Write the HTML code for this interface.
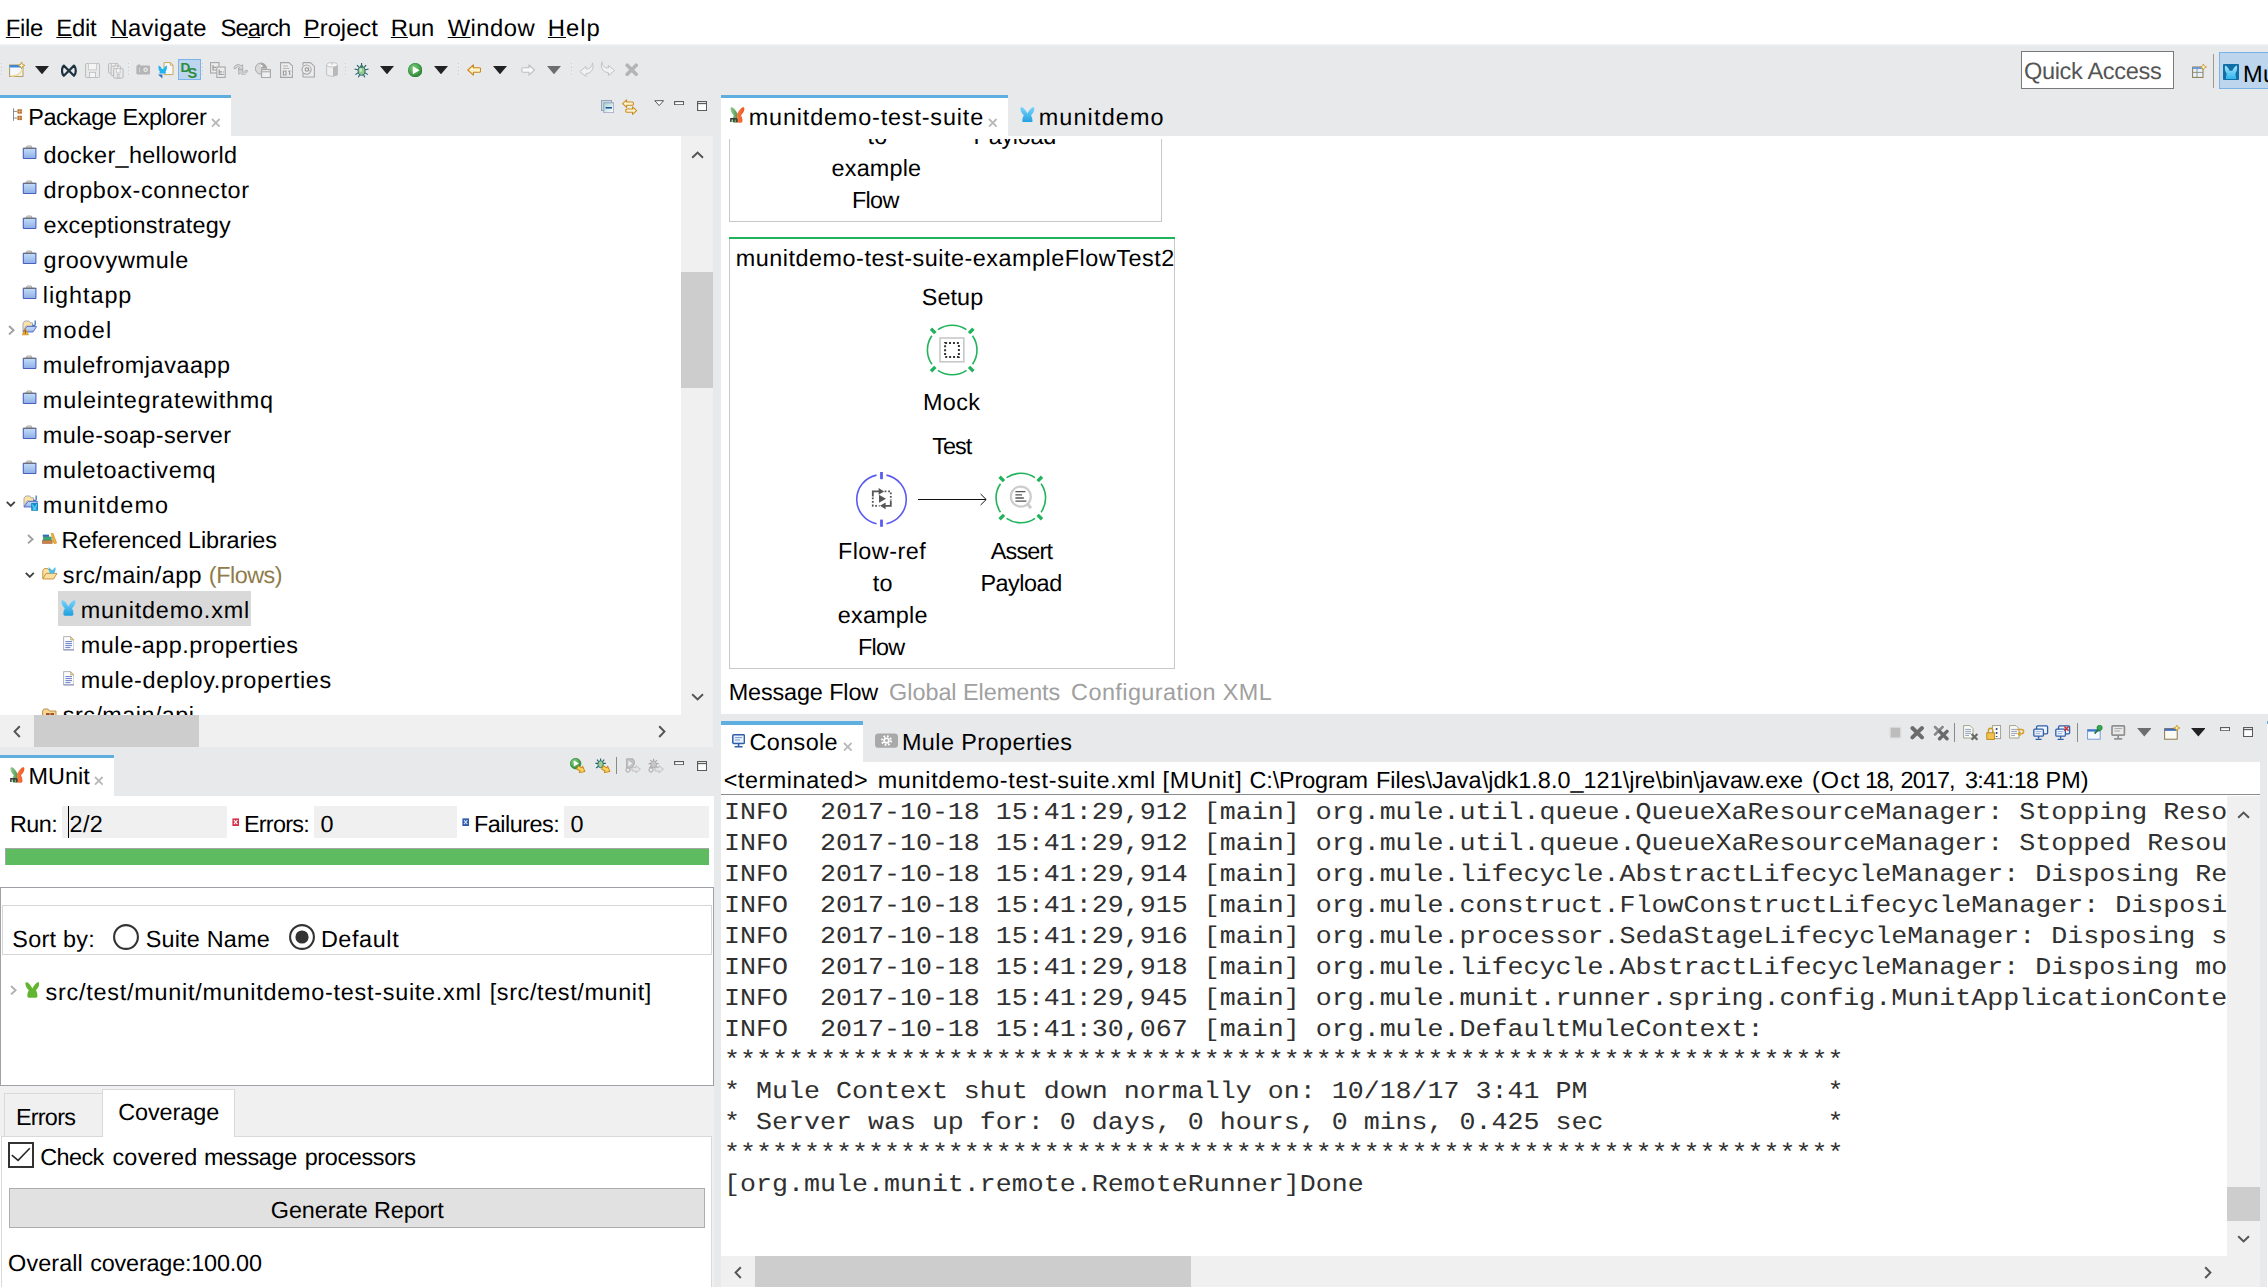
<!DOCTYPE html>
<html><head><meta charset="utf-8"><title>Anypoint Studio</title>
<style>
html,body{margin:0;padding:0}
body{width:2268px;height:1287px;overflow:hidden;background:#e8e9eb;position:relative;font-family:"Liberation Sans",sans-serif}
.r{position:absolute;display:block}
.t{position:absolute;white-space:pre;line-height:1;text-rendering:geometricPrecision;font-family:"Liberation Sans",sans-serif}
.m{position:absolute;white-space:pre;line-height:1;text-rendering:geometricPrecision;font-family:"Liberation Mono",monospace;font-size:24.2px;transform:scaleX(1.1017);transform-origin:0 0;color:#303030}
u{text-decoration-thickness:1.2px;text-underline-offset:1px}
</style></head><body>
<div class="r" style="left:0px;top:0px;width:2268.00px;height:44.00px;background:#fff;"></div>
<span class="t" style="left:5.85px;top:17.00px;font-size:23.8px;letter-spacing:-0.314px;color:#000;"><u>F</u>ile</span>
<span class="t" style="left:56.35px;top:17.00px;font-size:23.8px;letter-spacing:-0.262px;color:#000;"><u>E</u>dit</span>
<span class="t" style="left:110.55px;top:17.00px;font-size:23.8px;letter-spacing:0.296px;color:#000;"><u>N</u>avigate</span>
<span class="t" style="left:220.52px;top:17.00px;font-size:23.8px;letter-spacing:-0.937px;color:#000;">Se<u>a</u>rch</span>
<span class="t" style="left:303.85px;top:17.00px;font-size:23.8px;letter-spacing:-0.008px;color:#000;"><u>P</u>roject</span>
<span class="t" style="left:390.85px;top:17.00px;font-size:23.8px;letter-spacing:-0.132px;color:#000;"><u>R</u>un</span>
<span class="t" style="left:447.70px;top:17.00px;font-size:23.8px;letter-spacing:0.459px;color:#000;"><u>W</u>indow</span>
<span class="t" style="left:547.85px;top:17.00px;font-size:23.8px;letter-spacing:0.967px;color:#000;"><u>H</u>elp</span>
<div class="r" style="left:0px;top:44px;width:2268.00px;height:2.00px;background:linear-gradient(#f4f4f5,#e8e9eb);"></div>
<div class="r" style="left:2021px;top:51px;width:153.00px;height:38.00px;background:#fff;border:1px solid #7a7a7a;box-sizing:border-box;"></div>
<span class="t" style="left:2023.88px;top:61.00px;font-size:23.6px;letter-spacing:-0.334px;color:#555;">Quick Access</span>
<div class="r" style="left:2213px;top:54px;width:1.00px;height:34.00px;background:#9a9a9a;"></div>
<div class="r" style="left:2219px;top:52px;width:49.00px;height:37.00px;background:#bdd6ee;border:1px solid #7ab2ea;border-right:none;box-sizing:border-box;"></div>
<span class="t" style="left:2243.06px;top:64.00px;font-size:23.6px;letter-spacing:0.418px;color:#000;">Mu</span>
<div class="r" style="left:0px;top:95px;width:231.00px;height:3.00px;background:#5eaee0;"></div>
<div class="r" style="left:0px;top:98px;width:231.00px;height:37.50px;background:#fff;"></div>
<span class="t" style="left:28.28px;top:106.00px;font-size:23.4px;letter-spacing:-0.413px;color:#000;">Package Explorer</span>
<div class="r" style="left:0px;top:135.5px;width:681.30px;height:579.10px;background:#fff;"></div>
<div class="r" style="left:681.3px;top:135.5px;width:32.20px;height:611.50px;background:#f0f0f0;"></div>
<div class="r" style="left:681.3px;top:271.8px;width:32.20px;height:116.70px;background:#cdcdcd;"></div>
<div class="r" style="left:0px;top:714.6px;width:681.30px;height:32.40px;background:#f0f0f0;"></div>
<div class="r" style="left:34px;top:714.6px;width:164.70px;height:32.40px;background:#cdcdcd;"></div>
<div class="r" style="left:58px;top:591px;width:192.70px;height:35.00px;background:#d9d9d9;"></div>
<span class="t" style="left:43.42px;top:144.00px;font-size:23.4px;letter-spacing:0.324px;color:#000;">docker_helloworld</span>
<span class="t" style="left:43.42px;top:179.00px;font-size:23.4px;letter-spacing:0.659px;color:#000;">dropbox-connector</span>
<span class="t" style="left:43.41px;top:214.00px;font-size:23.4px;letter-spacing:0.246px;color:#000;">exceptionstrategy</span>
<span class="t" style="left:43.42px;top:249.00px;font-size:23.4px;letter-spacing:0.717px;color:#000;">groovywmule</span>
<span class="t" style="left:42.82px;top:284.00px;font-size:23.4px;letter-spacing:0.941px;color:#000;">lightapp</span>
<span class="t" style="left:42.85px;top:319.00px;font-size:23.4px;letter-spacing:1.171px;color:#000;">model</span>
<span class="t" style="left:42.85px;top:354.00px;font-size:23.4px;letter-spacing:0.560px;color:#000;">mulefromjavaapp</span>
<span class="t" style="left:42.85px;top:389.00px;font-size:23.4px;letter-spacing:0.802px;color:#000;">muleintegratewithmq</span>
<span class="t" style="left:42.85px;top:424.00px;font-size:23.4px;letter-spacing:0.412px;color:#000;">mule-soap-server</span>
<span class="t" style="left:42.85px;top:459.00px;font-size:23.4px;letter-spacing:0.691px;color:#000;">muletoactivemq</span>
<span class="t" style="left:42.85px;top:494.00px;font-size:23.4px;letter-spacing:1.197px;color:#000;">munitdemo</span>
<span class="t" style="left:61.58px;top:529.00px;font-size:23.4px;letter-spacing:-0.093px;color:#000;">Referenced Libraries</span>
<span class="t" style="left:62.85px;top:564.00px;font-size:23.4px;letter-spacing:0.443px;color:#000;">src/main/app</span>
<span class="t" style="left:80.65px;top:599.00px;font-size:23.4px;letter-spacing:0.831px;color:#000;">munitdemo.xml</span>
<span class="t" style="left:80.65px;top:634.00px;font-size:23.4px;letter-spacing:0.521px;color:#000;">mule-app.properties</span>
<span class="t" style="left:80.65px;top:669.00px;font-size:23.4px;letter-spacing:0.686px;color:#000;">mule-deploy.properties</span>
<span class="t" style="left:208.85px;top:564.00px;font-size:23.4px;letter-spacing:-0.482px;color:#8f7c4a;">(Flows)</span>
<div class="r" style="left:0;top:696px;width:681px;height:18.6px;overflow:hidden">
<span class="t" style="left:62.85px;top:8.00px;font-size:23.4px;letter-spacing:0.453px;color:#000;">src/main/api</span>
</div>
<div class="r" style="left:0px;top:755px;width:114.00px;height:3.00px;background:#5eaee0;"></div>
<div class="r" style="left:0px;top:758px;width:114.00px;height:38.00px;background:#fff;"></div>
<span class="t" style="left:28.48px;top:765.00px;font-size:23.4px;letter-spacing:0.071px;color:#000;">MUnit</span>
<div class="r" style="left:0px;top:796px;width:713.80px;height:491.00px;background:#fff;"></div>
<span class="t" style="left:9.88px;top:813.00px;font-size:23.4px;letter-spacing:-0.491px;color:#000;">Run:</span>
<div class="r" style="left:62px;top:806px;width:165.00px;height:32.00px;background:#f0f0f0;"></div>
<div class="r" style="left:68px;top:806px;width:1.30px;height:32.00px;background:#000;"></div>
<span class="t" style="left:69.62px;top:813.00px;font-size:23.4px;letter-spacing:0.362px;color:#000;">2/2</span>
<span class="t" style="left:243.88px;top:813.00px;font-size:23.4px;letter-spacing:-0.708px;color:#000;">Errors:</span>
<div class="r" style="left:314px;top:806px;width:143.00px;height:32.00px;background:#f0f0f0;"></div>
<span class="t" style="left:320.39px;top:813.00px;font-size:23.4px;letter-spacing:-0.286px;color:#000;">0</span>
<span class="t" style="left:473.88px;top:813.00px;font-size:23.4px;letter-spacing:-0.472px;color:#000;">Failures:</span>
<div class="r" style="left:564px;top:806px;width:145.00px;height:32.00px;background:#f0f0f0;"></div>
<span class="t" style="left:570.49px;top:813.00px;font-size:23.4px;letter-spacing:-0.486px;color:#000;">0</span>
<div class="r" style="left:5px;top:848px;width:704.00px;height:17.00px;background:#5fbb5f;border-top:1px solid #a3a8a3;border-left:1px solid #a3a8a3;box-sizing:border-box;"></div>
<div class="r" style="left:0px;top:887px;width:714.00px;height:198.80px;background:#fff;border:1.5px solid #a0a0a8;box-sizing:border-box;"></div>
<div class="r" style="left:1.8px;top:905px;width:710.20px;height:50.20px;background:#fff;border:1px solid #d6d6d6;box-sizing:border-box;"></div>
<span class="t" style="left:12.34px;top:928.00px;font-size:23.4px;letter-spacing:0.267px;color:#000;">Sort by:</span>
<span class="t" style="left:145.74px;top:928.00px;font-size:23.4px;letter-spacing:0.194px;color:#000;">Suite Name</span>
<span class="t" style="left:320.88px;top:928.00px;font-size:23.4px;letter-spacing:0.608px;color:#000;">Default</span>
<span class="t" style="left:45.55px;top:981.00px;font-size:23.4px;letter-spacing:0.753px;color:#000;">src/test/munit/munitdemo-test-suite.xml</span>
<span class="t" style="left:489.73px;top:981.00px;font-size:23.4px;letter-spacing:0.633px;color:#000;">[src/test/munit]</span>
<div class="r" style="left:0px;top:1085.8px;width:713.80px;height:50.20px;background:#f0f0f0;"></div>
<div class="r" style="left:4px;top:1093px;width:99.00px;height:43.00px;background:#f0f0f0;border:1px solid #d9d9d9;border-bottom:none;box-sizing:border-box;"></div>
<div class="r" style="left:102px;top:1089.4px;width:132.60px;height:47.60px;background:#fff;border:1px solid #d9d9d9;border-bottom:none;box-sizing:border-box;"></div>
<div class="r" style="left:0.5px;top:1135.6px;width:711.00px;height:154.40px;background:#fff;border:1px solid #d9d9d9;box-sizing:border-box;"></div>
<div class="r" style="left:103px;top:1134px;width:130.60px;height:4.00px;background:#fff;"></div>
<div class="r" style="left:711.5px;top:1135.6px;width:2.30px;height:151.40px;background:#f0f0f0;"></div>
<span class="t" style="left:15.88px;top:1106.00px;font-size:23.4px;letter-spacing:-0.728px;color:#000;">Errors</span>
<span class="t" style="left:118.21px;top:1101.00px;font-size:23.4px;letter-spacing:-0.062px;color:#000;">Coverage</span>
<div class="r" style="left:8.3px;top:1142.1px;width:25.60px;height:25.50px;background:#fff;border:2px solid #333;box-sizing:border-box;"></div>
<span class="t" style="left:40.21px;top:1146.00px;font-size:23.4px;letter-spacing:-0.569px;color:#000;">Check</span>
<span class="t" style="left:112.41px;top:1146.00px;font-size:23.4px;letter-spacing:0.259px;color:#000;">covered</span>
<span class="t" style="left:204.05px;top:1146.00px;font-size:23.4px;letter-spacing:-0.276px;color:#000;">message</span>
<span class="t" style="left:304.69px;top:1146.00px;font-size:23.4px;letter-spacing:-0.343px;color:#000;">processors</span>
<div class="r" style="left:9px;top:1188.2px;width:696.00px;height:39.60px;background:#e1e1e1;border:1px solid #adadad;box-sizing:border-box;"></div>
<span class="t" style="left:270.82px;top:1199.00px;font-size:23.4px;letter-spacing:-0.090px;color:#000;">Generate Report</span>
<span class="t" style="left:8.09px;top:1252.00px;font-size:23.4px;letter-spacing:0.109px;color:#000;">Overall</span>
<span class="t" style="left:90.21px;top:1252.00px;font-size:23.4px;letter-spacing:-0.181px;color:#000;">coverage:100.00</span>
<div class="r" style="left:721px;top:95px;width:286.70px;height:3.00px;background:#5eaee0;"></div>
<div class="r" style="left:721px;top:98px;width:286.70px;height:37.50px;background:#fff;"></div>
<div class="r" style="left:721px;top:135.5px;width:1547.00px;height:578.00px;background:#fff;"></div>
<span class="t" style="left:748.75px;top:106.00px;font-size:23.4px;letter-spacing:0.842px;color:#000;">munitdemo-test-suite</span>
<span class="t" style="left:1038.65px;top:106.00px;font-size:23.4px;letter-spacing:1.160px;color:#000;">munitdemo</span>
<div class="r" style="left:721px;top:139px;width:1547px;height:540px;overflow:hidden"><div style="position:absolute;left:-721px;top:-139px">
<div class="r" style="left:729px;top:100px;width:433.00px;height:122.00px;background:#fff;border:1px solid #c8c8c8;box-sizing:border-box;"></div>
<span class="t" style="left:867.45px;top:125.00px;font-size:23.4px;letter-spacing:0.222px;color:#000;">to</span>
<span class="t" style="left:973.38px;top:125.00px;font-size:23.4px;letter-spacing:-0.290px;color:#000;">Payload</span>
<span class="t" style="left:831.61px;top:157.00px;font-size:23.4px;letter-spacing:0.181px;color:#000;">example</span>
<span class="t" style="left:851.88px;top:189.00px;font-size:23.4px;letter-spacing:-0.648px;color:#000;">Flow</span>
<div class="r" style="left:729px;top:239px;width:446.00px;height:430.00px;background:#fff;border:1px solid #c8c8c8;border-top:none;box-sizing:border-box;"></div>
<div class="r" style="left:729px;top:236.6px;width:446.00px;height:2.70px;background:#21b35c;"></div>
<span class="t" style="left:735.75px;top:247.00px;font-size:23.4px;letter-spacing:0.516px;color:#000;">munitdemo-test-suite-exampleFlowTest2</span>
<span class="t" style="left:921.74px;top:286.00px;font-size:23.4px;letter-spacing:0.073px;color:#000;">Setup</span>
<span class="t" style="left:922.88px;top:391.00px;font-size:23.4px;letter-spacing:0.426px;color:#000;">Mock</span>
<span class="t" style="left:932.27px;top:435.00px;font-size:23.4px;letter-spacing:-0.939px;color:#000;">Test</span>
<span class="t" style="left:837.88px;top:540.00px;font-size:23.4px;letter-spacing:0.497px;color:#000;">Flow-ref</span>
<span class="t" style="left:872.75px;top:572.00px;font-size:23.4px;letter-spacing:0.222px;color:#000;">to</span>
<span class="t" style="left:837.81px;top:604.00px;font-size:23.4px;letter-spacing:0.197px;color:#000;">example</span>
<span class="t" style="left:857.88px;top:636.00px;font-size:23.4px;letter-spacing:-0.715px;color:#000;">Flow</span>
<span class="t" style="left:990.75px;top:540.00px;font-size:23.4px;letter-spacing:-0.800px;color:#000;">Assert</span>
<span class="t" style="left:980.38px;top:572.00px;font-size:23.4px;letter-spacing:-0.456px;color:#000;">Payload</span>
<svg class="r" style="left:721px;top:139px" width="500" height="540" viewBox="721 139 500 540"><path d="M966.42,370.31 A24.8,24.8 0 0 1 937.98,370.31" fill="none" stroke="#21b35c" stroke-width="1.6"/><path d="M931.89,364.22 A24.8,24.8 0 0 1 931.89,335.78" fill="none" stroke="#21b35c" stroke-width="1.6"/><path d="M937.98,329.69 A24.8,24.8 0 0 1 966.42,329.69" fill="none" stroke="#21b35c" stroke-width="1.6"/><path d="M972.51,335.78 A24.8,24.8 0 0 1 972.51,364.22" fill="none" stroke="#21b35c" stroke-width="1.6"/><path d="M969.03,366.83 L973.41,371.21" stroke="#21b35c" stroke-width="3.4"/><path d="M935.37,366.83 L930.99,371.21" stroke="#21b35c" stroke-width="3.4"/><path d="M935.37,333.17 L930.99,328.79" stroke="#21b35c" stroke-width="3.4"/><path d="M969.03,333.17 L973.41,328.79" stroke="#21b35c" stroke-width="3.4"/><rect x="940" y="338" width="23.8" height="23.8" fill="#fff" stroke="#c8c8c8" stroke-width="1.6"/><rect x="945.1" y="343.1" width="13.8" height="13.8" fill="none" stroke="#333" stroke-width="2" stroke-dasharray="2,1.93"/><path d="M876.56,523.70 A24.8,24.8 0 0 1 876.56,475.10" fill="none" stroke="#5b5bf2" stroke-width="1.6"/><path d="M886.44,475.10 A24.8,24.8 0 0 1 886.44,523.70" fill="none" stroke="#5b5bf2" stroke-width="1.6"/><path d="M881.50,519.60 L881.50,526.80" stroke="#5b5bf2" stroke-width="2.8"/><path d="M881.50,479.20 L881.50,472.00" stroke="#5b5bf2" stroke-width="2.8"/><g transform="translate(871.5999999999999,487.4)"><path d="M1.2,9 V4 H8" fill="none" stroke="#555" stroke-width="1.8"/><polygon points="7,0.6 12.6,4 7,7.4" fill="#555"/><path d="M19.2,13 V18.4 H13" fill="none" stroke="#555" stroke-width="1.8"/><polygon points="14,15 8.4,18.4 14,21.8" fill="#555"/><polygon points="7.4,7.4 14.4,11.4 7.4,15.4" fill="#555"/><path d="M1.2,10 V18.4 H8" fill="none" stroke="#555" stroke-width="1.8" stroke-dasharray="1.8,1.8"/><path d="M13,4 H19.2 V12.6" fill="none" stroke="#555" stroke-width="1.8" stroke-dasharray="1.8,1.8"/></g><path d="M1035.02,518.31 A24.8,24.8 0 0 1 1006.58,518.31" fill="none" stroke="#21b35c" stroke-width="1.6"/><path d="M1000.49,512.22 A24.8,24.8 0 0 1 1000.49,483.78" fill="none" stroke="#21b35c" stroke-width="1.6"/><path d="M1006.58,477.69 A24.8,24.8 0 0 1 1035.02,477.69" fill="none" stroke="#21b35c" stroke-width="1.6"/><path d="M1041.11,483.78 A24.8,24.8 0 0 1 1041.11,512.22" fill="none" stroke="#21b35c" stroke-width="1.6"/><path d="M1037.63,514.83 L1042.01,519.21" stroke="#21b35c" stroke-width="3.4"/><path d="M1003.97,514.83 L999.59,519.21" stroke="#21b35c" stroke-width="3.4"/><path d="M1003.97,481.17 L999.59,476.79" stroke="#21b35c" stroke-width="3.4"/><path d="M1037.63,481.17 L1042.01,476.79" stroke="#21b35c" stroke-width="3.4"/><circle cx="1020.8" cy="496.6" r="10" fill="#fff" stroke="#cdcdcd" stroke-width="2.2"/><path d="M1027.3999999999999,503.8 L1031.0,508.20000000000005" stroke="#cdcdcd" stroke-width="3"/><path d="M1015.4,491.6 H1025.3999999999999 M1015.4,494.8 H1022.0 M1015.4,498.0 H1023.8 M1015.4,501.20000000000005 H1026.3999999999999" stroke="#555" stroke-width="1.3"/><path d="M918,499.5 H986 M980.6,494 L986.2,499.5 L980.6,505" fill="none" stroke="#111" stroke-width="1"/></svg>
</div></div>
<span class="t" style="left:728.68px;top:681.00px;font-size:23.4px;letter-spacing:-0.118px;color:#000;">Message Flow</span>
<span class="t" style="left:889.12px;top:681.00px;font-size:23.4px;letter-spacing:-0.033px;color:#a0a0a0;">Global Elements</span>
<span class="t" style="left:1071.11px;top:681.00px;font-size:23.4px;letter-spacing:0.435px;color:#a0a0a0;">Configuration XML</span>
<div class="r" style="left:721px;top:721px;width:142.00px;height:3.70px;background:#5eaee0;"></div>
<div class="r" style="left:721px;top:724.7px;width:142.00px;height:37.30px;background:#fff;"></div>
<span class="t" style="left:749.61px;top:731.00px;font-size:23.4px;letter-spacing:0.362px;color:#000;">Console</span>
<span class="t" style="left:901.88px;top:731.00px;font-size:23.4px;letter-spacing:0.442px;color:#000;">Mule Properties</span>
<div class="r" style="left:721px;top:762px;width:1539.00px;height:525.00px;background:#fff;"></div>
<div class="r" style="left:2266.5px;top:720.5px;width:1.50px;height:3.50px;background:#5eaee0;"></div>
<div class="r" style="left:2266.5px;top:724px;width:1.50px;height:563.00px;background:#fff;"></div>
<span class="t" style="left:723.65px;top:769.00px;font-size:23.4px;letter-spacing:0.555px;color:#000;">&lt;terminated&gt;</span>
<span class="t" style="left:877.65px;top:769.00px;font-size:23.4px;letter-spacing:0.706px;color:#000;">munitdemo-test-suite.xml</span>
<span class="t" style="left:1162.53px;top:769.00px;font-size:23.4px;letter-spacing:0.855px;color:#000;">[MUnit]</span>
<span class="t" style="left:1249.61px;top:769.00px;font-size:23.4px;letter-spacing:-0.145px;color:#000;">C:\Program</span>
<span class="t" style="left:1375.88px;top:769.00px;font-size:23.4px;letter-spacing:0.048px;color:#000;">Files\Java\jdk1.8.0_121\jre\bin\javaw.exe</span>
<span class="t" style="left:1811.95px;top:769.00px;font-size:23.4px;letter-spacing:1.109px;color:#000;">(Oct</span>
<span class="t" style="left:1865.02px;top:769.00px;font-size:23.4px;letter-spacing:-1.472px;color:#000;">18,</span>
<span class="t" style="left:1900.62px;top:769.00px;font-size:23.4px;letter-spacing:-0.895px;color:#000;">2017,</span>
<span class="t" style="left:1964.91px;top:769.00px;font-size:23.4px;letter-spacing:-0.644px;color:#000;">3:41:18</span>
<span class="t" style="left:2045.48px;top:769.00px;font-size:23.4px;letter-spacing:0.138px;color:#000;">PM)</span>
<div class="r" style="left:721px;top:793.8px;width:1539.00px;height:1.20px;background:#8c8c8c;"></div>
<div class="r" style="left:2227px;top:796.4px;width:33.00px;height:459.60px;background:#f0f0f0;"></div>
<div class="r" style="left:2227px;top:1187px;width:33.00px;height:34.00px;background:#cdcdcd;"></div>
<div class="r" style="left:721px;top:1255.7px;width:1539.00px;height:31.30px;background:#f0f0f0;"></div>
<div class="r" style="left:754.7px;top:1255.7px;width:436.30px;height:31.30px;background:#cdcdcd;"></div>
<div class="r" style="left:721px;top:796px;width:1505.5px;height:459px;overflow:hidden">
<span class="m" style="left:2.5px;top:6px">INFO  2017-10-18 15:41:29,912 [main] org.mule.util.queue.QueueXaResourceManager: Stopping ResourceManager</span>
<span class="m" style="left:2.5px;top:37px">INFO  2017-10-18 15:41:29,912 [main] org.mule.util.queue.QueueXaResourceManager: Stopped ResourceManager</span>
<span class="m" style="left:2.5px;top:68px">INFO  2017-10-18 15:41:29,914 [main] org.mule.lifecycle.AbstractLifecycleManager: Disposing RegistryLifecycleManager</span>
<span class="m" style="left:2.5px;top:99px">INFO  2017-10-18 15:41:29,915 [main] org.mule.construct.FlowConstructLifecycleManager: Disposing flow: exampleFlow</span>
<span class="m" style="left:2.5px;top:130px">INFO  2017-10-18 15:41:29,916 [main] org.mule.processor.SedaStageLifecycleManager: Disposing service: exampleFlow.stage1</span>
<span class="m" style="left:2.5px;top:161px">INFO  2017-10-18 15:41:29,918 [main] org.mule.lifecycle.AbstractLifecycleManager: Disposing model: _muleSystemModel</span>
<span class="m" style="left:2.5px;top:192px">INFO  2017-10-18 15:41:29,945 [main] org.mule.munit.runner.spring.config.MunitApplicationContext: Closing</span>
<span class="m" style="left:2.5px;top:223px">INFO  2017-10-18 15:41:30,067 [main] org.mule.DefaultMuleContext: </span>
<span class="m" style="left:2.5px;top:254px">**********************************************************************</span>
<span class="m" style="left:2.5px;top:285px">* Mule Context shut down normally on: 10/18/17 3:41 PM               *</span>
<span class="m" style="left:2.5px;top:316px">* Server was up for: 0 days, 0 hours, 0 mins, 0.425 sec              *</span>
<span class="m" style="left:2.5px;top:347px">**********************************************************************</span>
<span class="m" style="left:2.5px;top:378px">[org.mule.munit.remote.RemoteRunner]Done</span>
</div>
<svg class="r" style="left:1px;top:62px" width="3" height="14" viewBox="0 0 3 14"><path d="M1,0 V13" stroke="#f8f8f8" stroke-width="2" stroke-dasharray="1.6,1.9"/><path d="M0.6,0.4 V13" stroke="#cfcfd3" stroke-width="1.2" stroke-dasharray="1.6,1.9"/></svg>
<svg class="r" style="left:8.6px;top:62.2px" width="16.4" height="16" viewBox="0 0 16.4 16"><rect x="0.6" y="3" width="13.4" height="11.4" fill="#f3f9ff" stroke="#b4975a" stroke-width="1"/><rect x="0.6" y="3" width="13.4" height="2.6" fill="#3f86d6"/><rect x="0.6" y="5.2" width="13.4" height="0.8" fill="#9fc6ee"/><path d="M2,14 C8,14 12,12 13.4,7" stroke="#f3dc9a" stroke-width="1.6" fill="none"/><path d="M12.6,0 L13.6,2.4 L16,3.4 L13.6,4.4 L12.6,6.8 L11.6,4.4 L9.2,3.4 L11.6,2.4 Z" fill="#fff8dc" stroke="#c8962c" stroke-width="0.9"/></svg>
<svg class="r" style="left:35px;top:66px" width="14" height="8.4" viewBox="0 0 14 8.4"><polygon points="0,0 14,0 7,8.3" fill="#222"/></svg>
<svg class="r" style="left:60.6px;top:62.6px" width="16" height="15.4" viewBox="0 0 16 15.4"><path d="M2.8,2.6 L13,12.8 C15.4,10.6 15.4,4.8 13,2.6 L2.8,12.8 C0.4,10.6 0.4,4.8 2.8,2.6 Z" fill="none" stroke="#1d333f" stroke-width="2.2" stroke-linejoin="round"/></svg>
<svg class="r" style="left:85px;top:63px" width="15.4" height="15.4" viewBox="0 0 15.4 15.4"><rect x="0.6" y="0.6" width="14" height="14" rx="1" fill="#e9e9e9" stroke="#b9b9b9" stroke-width="1"/><rect x="3.6" y="0.6" width="8" height="6.3" fill="#f4f4f4" stroke="#c4c4c4" stroke-width="0.8"/><rect x="4.6" y="9.3" width="6" height="5.3" fill="#f4f4f4" stroke="#b9b9b9" stroke-width="0.8"/></svg>
<svg class="r" style="left:108px;top:62.6px" width="16" height="16" viewBox="0 0 16 16"><rect x="0.6" y="0.6" width="9.5" height="9.5" rx="1" fill="#e9e9e9" stroke="#b9b9b9" stroke-width="1"/><rect x="3.6" y="0.6" width="3.5" height="4.3" fill="#f4f4f4" stroke="#c4c4c4" stroke-width="0.8"/><rect x="4.6" y="6.5" width="1.5" height="3.6" fill="#f4f4f4" stroke="#b9b9b9" stroke-width="0.8"/><rect x="3.1" y="3.1" width="9.5" height="9.5" rx="1" fill="#e9e9e9" stroke="#b9b9b9" stroke-width="1"/><rect x="6.1" y="3.1" width="3.5" height="4.3" fill="#f4f4f4" stroke="#c4c4c4" stroke-width="0.8"/><rect x="7.1" y="9.0" width="1.5" height="3.6" fill="#f4f4f4" stroke="#b9b9b9" stroke-width="0.8"/><rect x="5.6" y="5.6" width="9.5" height="9.5" rx="1" fill="#e9e9e9" stroke="#b9b9b9" stroke-width="1"/><rect x="8.6" y="5.6" width="3.5" height="4.3" fill="#f4f4f4" stroke="#c4c4c4" stroke-width="0.8"/><rect x="9.6" y="11.5" width="1.5" height="3.6" fill="#f4f4f4" stroke="#b9b9b9" stroke-width="0.8"/></svg>
<svg class="r" style="left:128px;top:62px" width="3" height="14" viewBox="0 0 3 14"><path d="M1,0 V13" stroke="#f8f8f8" stroke-width="2" stroke-dasharray="1.6,1.9"/><path d="M0.6,0.4 V13" stroke="#cfcfd3" stroke-width="1.2" stroke-dasharray="1.6,1.9"/></svg>
<svg class="r" style="left:136px;top:64.4px" width="14.4" height="11" viewBox="0 0 14.4 11"><path d="M0.4,2 L2,0.6 L4,0.6 L4.6,1.4 L13,1.4 Q14,1.4 14,2.4 L14,9.6 Q14,10.4 13,10.4 L1.4,10.4 Q0.4,10.4 0.4,9.6 Z" fill="#b4b4b4"/><circle cx="9.6" cy="5.8" r="2.4" fill="#e4e4e4"/><circle cx="9.6" cy="5.8" r="0.9" fill="#b4b4b4"/><rect x="3" y="3.4" width="1.1" height="5" fill="#d2d2d2"/></svg>
<svg class="r" style="left:158.4px;top:61.6px" width="16" height="17" viewBox="0 0 16 17"><path d="M6,0.6 L12.4,0.6 L15,3.2 L15,12.6 L6,12.6 Z" fill="#f7f9ff" stroke="#c9a85a" stroke-width="1"/><path d="M12.4,0.6 L12.4,3.2 L15,3.2" fill="none" stroke="#c9a85a" stroke-width="0.9"/><path d="M0.6,3.4 C2,3.8 3.4,5.4 3.8,7 L5.6,7 C6,5.4 7.4,3.8 8.8,3.4 C9.2,5.4 8.8,7.8 7.6,9.4 L8,11.4 L1.4,11.4 L1.8,9.4 C0.6,7.8 0.2,5.4 0.6,3.4Z" fill="#22b4ee"/><polygon points="0,12.4 4.4,12.4 4.4,16.4" fill="#2f6fc4"/></svg>
<div class="r" style="left:178px;top:59px;width:23.00px;height:21.00px;background:#bdd6ee;border:1px solid #7ab2ea;box-sizing:border-box;"></div>
<svg class="r" style="left:180px;top:60px" width="20" height="20" viewBox="0 0 20 20"><text x="0.6" y="11.6" font-family="Liberation Sans, sans-serif" font-weight="bold" font-size="13.6" fill="#2e8b3e">D</text><text x="7.4" y="18.4" font-family="Liberation Sans, sans-serif" font-weight="bold" font-size="14.6" fill="#2e8b3e">S</text></svg>
<svg class="r" style="left:202.4px;top:62px" width="3" height="14" viewBox="0 0 3 14"><path d="M1,0 V13" stroke="#f8f8f8" stroke-width="2" stroke-dasharray="1.6,1.9"/><path d="M0.6,0.4 V13" stroke="#cfcfd3" stroke-width="1.2" stroke-dasharray="1.6,1.9"/></svg>
<svg class="r" style="left:209.6px;top:61.8px" width="16" height="16" viewBox="0 0 16 16"><rect x="0.6" y="0.6" width="8.4" height="10.4" fill="#ececec" stroke="#a6a6a6" stroke-width="1.1"/><path d="M3,3 V8 H6.4 M3,5.4 H6" stroke="#9c9c9c" stroke-width="1.2" fill="none"/><rect x="6.8" y="5" width="8.4" height="10.4" fill="#ececec" stroke="#a6a6a6" stroke-width="1.1"/><path d="M9.2,7.4 V12.4 H12.6 M9.2,9.8 H12" stroke="#9c9c9c" stroke-width="1.2" fill="none"/><path d="M13.4,9.6v1M13.4,12v1" stroke="#9c9c9c" stroke-width="1.1"/></svg>
<svg class="r" style="left:232.6px;top:62px" width="15.4" height="15" viewBox="0 0 15.4 15"><path d="M1,6.4 C1.4,2.4 6,1.4 8,4 L9.6,2.6 L9.8,7.4 L5,7 L6.6,5.6 C5.4,4.2 3.4,4.6 3,6.6 Z" fill="#d6d6d6" stroke="#a6a6a6" stroke-width="0.8"/><path d="M14.4,8.6 C14,12.6 9.4,13.6 7.4,11 L5.8,12.4 L5.6,7.6 L10.4,8 L8.8,9.4 C10,10.8 12,10.4 12.4,8.4 Z" fill="#d6d6d6" stroke="#a6a6a6" stroke-width="0.8"/></svg>
<svg class="r" style="left:255.4px;top:62px" width="16" height="16" viewBox="0 0 16 16"><circle cx="6" cy="6.6" r="5.6" fill="#d9d9d9" stroke="#a6a6a6" stroke-width="1"/><path d="M6,6.6 L6,1 A5.6,5.6 0 0 1 11.6,6.6 Z" fill="#a6a6a6"/><circle cx="6.6" cy="4" r="1" fill="#fff"/><rect x="6.6" y="7.6" width="8.8" height="8" fill="#f0f0f0" stroke="#a6a6a6" stroke-width="1.1"/><path d="M6.6,9.8H15.4" stroke="#a6a6a6" stroke-width="1"/></svg>
<svg class="r" style="left:279.6px;top:62px" width="13.4" height="16" viewBox="0 0 13.4 16"><path d="M0.6,0.6 L9,0.6 L12.6,4 L12.6,15.4 L0.6,15.4 Z" fill="#ececec" stroke="#a6a6a6" stroke-width="1.1"/><path d="M3,4 H8 M3,6.4 H9.4" stroke="#b4b4b4" stroke-width="1"/><path d="M3.4,9 H6 V13 H3.4 Z M8.4,9.4 L9.6,9 V13" fill="none" stroke="#9c9c9c" stroke-width="1.2"/><path d="M12,9 q1.6,2 0,5" stroke="#a6a6a6" fill="#ececec" stroke-width="1"/></svg>
<svg class="r" style="left:300.4px;top:62.4px" width="15" height="15.6" viewBox="0 0 15 15.6"><path d="M3,0.6 L10.4,0.6 L14.4,4.4 L14.4,15 L3,15 M3,15 L3,11 M3,3.6 L3,0.6" fill="#ececec" stroke="#a6a6a6" stroke-width="1.1"/><circle cx="6.6" cy="7.6" r="4.6" fill="#ececec" stroke="#a6a6a6" stroke-width="1.1"/><circle cx="6.8" cy="7.6" r="1.7" fill="none" stroke="#9c9c9c" stroke-width="1.1"/><path d="M8.6,5.6 V8.6 Q9.4,9.6 10,8.4" fill="none" stroke="#9c9c9c" stroke-width="1"/></svg>
<svg class="r" style="left:326px;top:62.4px" width="12.4" height="16" viewBox="0 0 12.4 16"><path d="M0.6,3 L0.6,13 Q6,16 11.6,13 L11.6,3" fill="#eeeeee" stroke="#c0c0c0" stroke-width="0.9"/><path d="M7,4.6 L11.6,3 L11.6,13 L7,14.6 Z" fill="#b8b8b8"/><ellipse cx="6.1" cy="2.8" rx="5.5" ry="2.2" fill="#f6f6f6" stroke="#c0c0c0" stroke-width="0.9"/><circle cx="6" cy="1.8" r="0.9" fill="#c8c8c8"/></svg>
<svg class="r" style="left:345px;top:62px" width="3" height="14" viewBox="0 0 3 14"><path d="M1,0 V13" stroke="#f8f8f8" stroke-width="2" stroke-dasharray="1.6,1.9"/><path d="M0.6,0.4 V13" stroke="#cfcfd3" stroke-width="1.2" stroke-dasharray="1.6,1.9"/></svg>
<svg class="r" style="left:353.8px;top:62.4px" width="15.4" height="16" viewBox="0 0 15.4 16"><path d="M7.6,4 L7.6,1 M3,3 L5.4,5.6 M12.2,3 L9.8,5.6 M0.6,7 L4.6,8 M14.6,7 L10.6,8 M1.4,12.6 L4.8,10.4 M13.8,12.6 L10.4,10.4 M4.4,15.4 L5.8,12.2 M10.8,15.4 L9.4,12.2" stroke="#1f5f6a" stroke-width="1.1" fill="none"/><ellipse cx="7.6" cy="9" rx="3.5" ry="4.3" fill="#8fc98a" stroke="#2a6a78" stroke-width="1"/><ellipse cx="6.8" cy="8" rx="1.4" ry="2" fill="#d8f0c8" opacity="0.8"/><circle cx="7.6" cy="4.4" r="1.5" fill="#3a7a6a"/></svg>
<svg class="r" style="left:380px;top:66px" width="14" height="8.4" viewBox="0 0 14 8.4"><polygon points="0,0 14,0 7,8.3" fill="#222"/></svg>
<svg class="r" style="left:407.8px;top:62.8px" width="14.6" height="14.6" viewBox="0 0 14.6 14.6"><defs><radialGradient id="rg" cx="0.4" cy="0.35" r="0.75"><stop offset="0" stop-color="#7fd37c"/><stop offset="1" stop-color="#1d7a2a"/></radialGradient></defs><circle cx="7.2" cy="7.2" r="6.9" fill="url(#rg)" stroke="#1f7a30" stroke-width="0.6"/><polygon points="4.8,3.2 11.6,7.2 4.8,11.2" fill="#fff"/></svg>
<svg class="r" style="left:434px;top:66px" width="14" height="8.4" viewBox="0 0 14 8.4"><polygon points="0,0 14,0 7,8.3" fill="#222"/></svg>
<svg class="r" style="left:458px;top:62px" width="3" height="14" viewBox="0 0 3 14"><path d="M1,0 V13" stroke="#f8f8f8" stroke-width="2" stroke-dasharray="1.6,1.9"/><path d="M0.6,0.4 V13" stroke="#cfcfd3" stroke-width="1.2" stroke-dasharray="1.6,1.9"/></svg>
<svg class="r" style="left:466.6px;top:64px" width="14.6" height="12" viewBox="0 0 14.6 12"><path d="M0.8,6 L6.4,0.8 L6.4,3.8 L12.4,3.8 Q13.6,3.8 13.6,5 L13.6,7 Q13.6,8.2 12.4,8.2 L6.4,8.2 L6.4,11.2 Z" fill="#fdf0c4" stroke="#c8861e" stroke-width="1.1" stroke-linejoin="round"/></svg>
<svg class="r" style="left:493px;top:66px" width="14" height="8.4" viewBox="0 0 14 8.4"><polygon points="0,0 14,0 7,8.3" fill="#222"/></svg>
<svg class="r" style="left:520.8px;top:64px" width="14.6" height="12" viewBox="0 0 14.6 12"><g transform="translate(14.4,0) scale(-1,1)"><path d="M0.8,6 L6.4,0.8 L6.4,3.8 L12.4,3.8 Q13.6,3.8 13.6,5 L13.6,7 Q13.6,8.2 12.4,8.2 L6.4,8.2 L6.4,11.2 Z" fill="#f8f8f8" stroke="#c0c0c0" stroke-width="1.1" stroke-linejoin="round"/></g></svg>
<svg class="r" style="left:547px;top:66px" width="14" height="8.4" viewBox="0 0 14 8.4"><polygon points="0,0 14,0 7,8.3" fill="#6d6d6d"/></svg>
<svg class="r" style="left:570.6px;top:62px" width="3" height="14" viewBox="0 0 3 14"><path d="M1,0 V13" stroke="#f8f8f8" stroke-width="2" stroke-dasharray="1.6,1.9"/><path d="M0.6,0.4 V13" stroke="#cfcfd3" stroke-width="1.2" stroke-dasharray="1.6,1.9"/></svg>
<svg class="r" style="left:578.8px;top:62.4px" width="16" height="15" viewBox="0 0 16 15"><path d="M0.8,9.6 L7,4.4 L7,7 C11,7 13.4,4.6 13.4,0.8 C15.4,5.4 13,11.4 7,11.6 L7,14.4 Z" fill="#f2f2f2" stroke="#c2c2c2" stroke-width="1" stroke-linejoin="round"/></svg>
<svg class="r" style="left:600.4px;top:61.4px" width="16" height="15" viewBox="0 0 16 15"><g transform="translate(15.4,0) scale(-1,1)"><path d="M0.8,9.6 L7,4.4 L7,7 C11,7 13.4,4.6 13.4,0.8 C15.4,5.4 13,11.4 7,11.6 L7,14.4 Z" fill="#f2f2f2" stroke="#c2c2c2" stroke-width="1" stroke-linejoin="round"/></g></svg>
<svg class="r" style="left:625.2px;top:63.4px" width="13.6" height="13.6" viewBox="0 0 13.6 13.6"><path d="M2.2,2.2 L11.2,11.2 M11.2,2.2 L2.2,11.2" stroke="#b4b4b4" stroke-width="3.6" stroke-linecap="round"/></svg>
<svg class="r" style="left:2191.6px;top:64.4px" width="15" height="14" viewBox="0 0 15 14"><rect x="0.6" y="3" width="10.4" height="10.4" fill="#e6f1fb" stroke="#8a7a4a" stroke-width="1"/><rect x="0.6" y="3" width="10.4" height="2" fill="#6a9ad8"/><path d="M0.6,8.4H11M5,5V13.4" stroke="#8a8a7a" stroke-width="0.9"/><path d="M11.4,0 L12.3,2.1 L14.6,3 L12.3,3.9 L11.4,6 L10.5,3.9 L8.2,3 L10.5,2.1Z" fill="#fff8dc" stroke="#c8962c" stroke-width="0.8"/></svg>
<svg class="r" style="left:2223px;top:64px" width="16" height="16" viewBox="0 0 16 16"><defs><linearGradient id="mpg" x1="0" y1="0" x2="0" y2="1"><stop offset="0" stop-color="#a6e4fc"/><stop offset="1" stop-color="#2fb4ee"/></linearGradient></defs><rect x="0" y="0" width="16" height="16" rx="0.8" fill="#0f6fa6"/><path d="M2.2,1.6 C4,2.2 5.8,4.4 6.6,6.8 L9.4,6.8 C10.2,4.4 12,2.2 13.8,1.6 C14.6,4.4 14,7.6 12.4,9.6 L13.2,15 L2.8,15 L3.6,9.6 C2,7.6 1.4,4.4 2.2,1.6Z" fill="url(#mpg)"/></svg>
<svg class="r" style="left:13px;top:108.4px" width="10" height="13.4" viewBox="0 0 10 13.4"><path d="M0.5,0.2 V12.8 M0.5,3.4 H4.4 M0.5,10 H4.4" stroke="#7a828c" stroke-width="0.9" fill="none"/><rect x="4.5" y="1.3" width="4.4" height="4.3" fill="#b8651f"/><path d="M4.5,3.45H8.9M6.7,1.3V5.6" stroke="#e8c49a" stroke-width="0.6"/><rect x="4.5" y="7.8" width="4.4" height="4.3" fill="#b8651f"/><path d="M4.5,9.95H8.9M6.7,7.8V12.1" stroke="#e8c49a" stroke-width="0.6"/></svg>
<svg class="r" style="left:211.4px;top:118px" width="9.6" height="9.6" viewBox="0 0 9.6 9.6"><path d="M1,1 L8.6,8.6 M8.6,1 L1,8.6" stroke="#b8b8b8" stroke-width="1.8"/></svg>
<svg class="r" style="left:600.8px;top:100px" width="13.4" height="13.4" viewBox="0 0 13.4 13.4"><defs><linearGradient id="ca" x1="0" y1="0" x2="1" y2="1"><stop offset="0" stop-color="#a8d4d4"/><stop offset="1" stop-color="#ffffff"/></linearGradient></defs><rect x="0.5" y="0.5" width="10" height="10" fill="#c4dede" stroke="#98a0bc" stroke-width="1"/><rect x="2.8" y="2.8" width="10" height="10" fill="url(#ca)" stroke="#98a0bc" stroke-width="1"/><path d="M4.6,7.8 H11" stroke="#104e8e" stroke-width="1.5"/></svg>
<svg class="r" style="left:622.2px;top:99px" width="16" height="15.6" viewBox="0 0 16 15.6"><path d="M0.6,4.6 L4.6,0.8 L4.6,3 L10.4,3 Q11.4,3 11.4,4 L11.4,5.2 Q11.4,6.2 10.4,6.2 L4.6,6.2 L4.6,8.4 Z" fill="#fdf2cc" stroke="#c98f24" stroke-width="1.1" stroke-linejoin="round"/><g transform="translate(15.2,7) scale(-1,1)"><path d="M0.6,4.6 L4.6,0.8 L4.6,3 L10.4,3 Q11.4,3 11.4,4 L11.4,5.2 Q11.4,6.2 10.4,6.2 L4.6,6.2 L4.6,8.4 Z" fill="#fdf2cc" stroke="#c98f24" stroke-width="1.1" stroke-linejoin="round"/></g></svg>
<svg class="r" style="left:653.6px;top:100.4px" width="10.4" height="6.4" viewBox="0 0 10.4 6.4"><polygon points="0.8,0.7 9.6,0.7 5.2,5.6" fill="#fff" stroke="#555" stroke-width="1"/></svg>
<svg class="r" style="left:673.6px;top:100.6px" width="10.2" height="4.4" viewBox="0 0 10.2 4.4"><rect x="0.6" y="0.6" width="9" height="3.2" fill="#fff" stroke="#555" stroke-width="1.1"/></svg>
<svg class="r" style="left:696.8px;top:100.6px" width="10.2" height="10.2" viewBox="0 0 10.2 10.2"><rect x="0.6" y="0.6" width="9" height="9" fill="#fff" stroke="#555" stroke-width="1.1"/><path d="M0.6,2.6H9.6" stroke="#555" stroke-width="1.1"/></svg>
<svg class="r" style="left:691.0px;top:151.20000000000002px" width="13.2" height="8" viewBox="0 0 13.2 8"><path d="M1.2,6.8 L6.6,1.6 L12,6.8" fill="none" stroke="#555" stroke-width="2"/></svg>
<svg class="r" style="left:691.0px;top:693px" width="13.2" height="8" viewBox="0 0 13.2 8"><path d="M1.2,1.2 L6.6,6.4 L12,1.2" fill="none" stroke="#555" stroke-width="2"/></svg>
<svg class="r" style="left:12.600000000000001px;top:724.6px" width="8" height="13.2" viewBox="0 0 8 13.2"><path d="M6.8,1.2 L1.6,6.6 L6.8,12" fill="none" stroke="#555" stroke-width="2"/></svg>
<svg class="r" style="left:658px;top:724.6px" width="8" height="13.2" viewBox="0 0 8 13.2"><path d="M1.2,1.2 L6.4,6.6 L1.2,12" fill="none" stroke="#555" stroke-width="2"/></svg>
<svg class="r" style="left:22px;top:144.6px" width="15" height="14.4" viewBox="0 0 15 14.4"><defs><linearGradient id="fc0" x1="0" y1="0" x2="0" y2="1"><stop offset="0" stop-color="#c2def8"/><stop offset="1" stop-color="#8eaee6"/></linearGradient></defs><path d="M4.2,3.2 L5.2,1 L9.2,1 L10.2,3.2 Z" fill="#f5dfa0" stroke="#9aa3ad" stroke-width="0.9"/><rect x="1.3" y="3.4" width="12.6" height="10.2" rx="0.8" fill="url(#fc0)" stroke="#4a5fc0" stroke-width="1.1"/><path d="M0.8,3.4 L14.4,3.4" stroke="#6a6f82" stroke-width="1.2"/></svg>
<svg class="r" style="left:22px;top:179.6px" width="15" height="14.4" viewBox="0 0 15 14.4"><defs><linearGradient id="fc1" x1="0" y1="0" x2="0" y2="1"><stop offset="0" stop-color="#c2def8"/><stop offset="1" stop-color="#8eaee6"/></linearGradient></defs><path d="M4.2,3.2 L5.2,1 L9.2,1 L10.2,3.2 Z" fill="#f5dfa0" stroke="#9aa3ad" stroke-width="0.9"/><rect x="1.3" y="3.4" width="12.6" height="10.2" rx="0.8" fill="url(#fc1)" stroke="#4a5fc0" stroke-width="1.1"/><path d="M0.8,3.4 L14.4,3.4" stroke="#6a6f82" stroke-width="1.2"/></svg>
<svg class="r" style="left:22px;top:214.6px" width="15" height="14.4" viewBox="0 0 15 14.4"><defs><linearGradient id="fc2" x1="0" y1="0" x2="0" y2="1"><stop offset="0" stop-color="#c2def8"/><stop offset="1" stop-color="#8eaee6"/></linearGradient></defs><path d="M4.2,3.2 L5.2,1 L9.2,1 L10.2,3.2 Z" fill="#f5dfa0" stroke="#9aa3ad" stroke-width="0.9"/><rect x="1.3" y="3.4" width="12.6" height="10.2" rx="0.8" fill="url(#fc2)" stroke="#4a5fc0" stroke-width="1.1"/><path d="M0.8,3.4 L14.4,3.4" stroke="#6a6f82" stroke-width="1.2"/></svg>
<svg class="r" style="left:22px;top:249.6px" width="15" height="14.4" viewBox="0 0 15 14.4"><defs><linearGradient id="fc3" x1="0" y1="0" x2="0" y2="1"><stop offset="0" stop-color="#c2def8"/><stop offset="1" stop-color="#8eaee6"/></linearGradient></defs><path d="M4.2,3.2 L5.2,1 L9.2,1 L10.2,3.2 Z" fill="#f5dfa0" stroke="#9aa3ad" stroke-width="0.9"/><rect x="1.3" y="3.4" width="12.6" height="10.2" rx="0.8" fill="url(#fc3)" stroke="#4a5fc0" stroke-width="1.1"/><path d="M0.8,3.4 L14.4,3.4" stroke="#6a6f82" stroke-width="1.2"/></svg>
<svg class="r" style="left:22px;top:284.6px" width="15" height="14.4" viewBox="0 0 15 14.4"><defs><linearGradient id="fc4" x1="0" y1="0" x2="0" y2="1"><stop offset="0" stop-color="#c2def8"/><stop offset="1" stop-color="#8eaee6"/></linearGradient></defs><path d="M4.2,3.2 L5.2,1 L9.2,1 L10.2,3.2 Z" fill="#f5dfa0" stroke="#9aa3ad" stroke-width="0.9"/><rect x="1.3" y="3.4" width="12.6" height="10.2" rx="0.8" fill="url(#fc4)" stroke="#4a5fc0" stroke-width="1.1"/><path d="M0.8,3.4 L14.4,3.4" stroke="#6a6f82" stroke-width="1.2"/></svg>
<svg class="r" style="left:22px;top:354.6px" width="15" height="14.4" viewBox="0 0 15 14.4"><defs><linearGradient id="fc6" x1="0" y1="0" x2="0" y2="1"><stop offset="0" stop-color="#c2def8"/><stop offset="1" stop-color="#8eaee6"/></linearGradient></defs><path d="M4.2,3.2 L5.2,1 L9.2,1 L10.2,3.2 Z" fill="#f5dfa0" stroke="#9aa3ad" stroke-width="0.9"/><rect x="1.3" y="3.4" width="12.6" height="10.2" rx="0.8" fill="url(#fc6)" stroke="#4a5fc0" stroke-width="1.1"/><path d="M0.8,3.4 L14.4,3.4" stroke="#6a6f82" stroke-width="1.2"/></svg>
<svg class="r" style="left:22px;top:389.6px" width="15" height="14.4" viewBox="0 0 15 14.4"><defs><linearGradient id="fc7" x1="0" y1="0" x2="0" y2="1"><stop offset="0" stop-color="#c2def8"/><stop offset="1" stop-color="#8eaee6"/></linearGradient></defs><path d="M4.2,3.2 L5.2,1 L9.2,1 L10.2,3.2 Z" fill="#f5dfa0" stroke="#9aa3ad" stroke-width="0.9"/><rect x="1.3" y="3.4" width="12.6" height="10.2" rx="0.8" fill="url(#fc7)" stroke="#4a5fc0" stroke-width="1.1"/><path d="M0.8,3.4 L14.4,3.4" stroke="#6a6f82" stroke-width="1.2"/></svg>
<svg class="r" style="left:22px;top:424.6px" width="15" height="14.4" viewBox="0 0 15 14.4"><defs><linearGradient id="fc8" x1="0" y1="0" x2="0" y2="1"><stop offset="0" stop-color="#c2def8"/><stop offset="1" stop-color="#8eaee6"/></linearGradient></defs><path d="M4.2,3.2 L5.2,1 L9.2,1 L10.2,3.2 Z" fill="#f5dfa0" stroke="#9aa3ad" stroke-width="0.9"/><rect x="1.3" y="3.4" width="12.6" height="10.2" rx="0.8" fill="url(#fc8)" stroke="#4a5fc0" stroke-width="1.1"/><path d="M0.8,3.4 L14.4,3.4" stroke="#6a6f82" stroke-width="1.2"/></svg>
<svg class="r" style="left:22px;top:459.6px" width="15" height="14.4" viewBox="0 0 15 14.4"><defs><linearGradient id="fc9" x1="0" y1="0" x2="0" y2="1"><stop offset="0" stop-color="#c2def8"/><stop offset="1" stop-color="#8eaee6"/></linearGradient></defs><path d="M4.2,3.2 L5.2,1 L9.2,1 L10.2,3.2 Z" fill="#f5dfa0" stroke="#9aa3ad" stroke-width="0.9"/><rect x="1.3" y="3.4" width="12.6" height="10.2" rx="0.8" fill="url(#fc9)" stroke="#4a5fc0" stroke-width="1.1"/><path d="M0.8,3.4 L14.4,3.4" stroke="#6a6f82" stroke-width="1.2"/></svg>
<svg class="r" style="left:22px;top:319.6px" width="16.4" height="16.4" viewBox="0 0 16.4 16.4"><defs><linearGradient id="jp1" x1="0" y1="0" x2="0" y2="1"><stop offset="0" stop-color="#cfe4fa"/><stop offset="1" stop-color="#8eb3ee"/></linearGradient></defs><path d="M1,11.5 L1,3.2 L2.8,1 L6.8,1 L8.2,2.8 L10.5,2.8 L10.5,6 L4,6 Z" fill="#fbe3a3" stroke="#9aa3b8" stroke-width="0.9"/><path d="M1,12 L5,6.6 L14.6,6.6 L11,12 Z" fill="url(#jp1)" stroke="#4d63c4" stroke-width="0.9"/><path d="M13.2,0.6 L13.2,4.6 C13.2,6 10.8,6 10.6,4.6" fill="none" stroke="#3c74b5" stroke-width="1.3"/><path d="M3.3,8.6 L6.4,14.8 L0.2,14.8 Z" fill="#f5b53a" stroke="#d08a1a" stroke-width="0.8" stroke-linejoin="round"/><path d="M3.3,10.4 L3.3,12.6 M3.3,13.4 L3.3,14" stroke="#3a2a00" stroke-width="0.9"/></svg>
<svg class="r" style="left:22.6px;top:494.6px" width="16.4" height="16.4" viewBox="0 0 16.4 16.4"><defs><linearGradient id="jp2" x1="0" y1="0" x2="0" y2="1"><stop offset="0" stop-color="#cfe4fa"/><stop offset="1" stop-color="#8eb3ee"/></linearGradient></defs><path d="M1,11.5 L1,3.2 L2.8,1 L6.8,1 L8.2,2.8 L10.5,2.8 L10.5,6 L4,6 Z" fill="#fbe3a3" stroke="#9aa3b8" stroke-width="0.9"/><path d="M1,12 L5,6.6 L14.6,6.6 L11,12 Z" fill="url(#jp2)" stroke="#4d63c4" stroke-width="0.9"/><path d="M13.2,0.6 L13.2,4.6 C13.2,6 10.8,6 10.6,4.6" fill="none" stroke="#3c74b5" stroke-width="1.3"/><rect x="8.2" y="8" width="6.8" height="7.8" fill="#1189c4"/><path d="M9.2,8.8 C10,9.2 10.8,10.2 11,11.2 L12.2,11.2 C12.4,10.2 13.2,9.2 14,8.8 C14.3,10.4 13.9,11.8 13.3,12.6 L13.6,15 L9.6,15 L9.9,12.6 C9.3,11.8 8.9,10.4 9.2,8.8Z" fill="#4fc6f5"/></svg>
<svg class="r" style="left:8.2px;top:324.6px" width="7" height="10.4" viewBox="0 0 7 10.4"><path d="M1,1 L5.6,5.2 L1,9.4" fill="none" stroke="#a0a0a0" stroke-width="1.9"/></svg>
<svg class="r" style="left:6.2px;top:501.2px" width="9.6" height="6" viewBox="0 0 9.6 6"><path d="M0.8,0.8 L4.8,4.8 L8.8,0.8" fill="none" stroke="#404040" stroke-width="1.9"/></svg>
<svg class="r" style="left:26.8px;top:534.2px" width="7" height="10.4" viewBox="0 0 7 10.4"><path d="M1,1 L5.6,5.2 L1,9.4" fill="none" stroke="#a0a0a0" stroke-width="1.9"/></svg>
<svg class="r" style="left:42px;top:532.8px" width="15" height="11.4" viewBox="0 0 15 11.4"><rect x="0.6" y="7.2" width="9.6" height="3.2" fill="#c9824a" stroke="#b0602a" stroke-width="0.6"/><rect x="1.6" y="4" width="7.6" height="3" fill="#3daa7c" stroke="#2a8a5c" stroke-width="0.6"/><rect x="0.8" y="1.6" width="6.2" height="2.2" fill="#2a5f9e"/><rect x="0.8" y="1.2" width="6.2" height="0.9" fill="#9fd8ee"/><path d="M9.2,0.4 L10.8,0 L14.6,10 L12,10.6 Z" fill="#f0b43c" stroke="#d68a1e" stroke-width="0.7"/></svg>
<svg class="r" style="left:25px;top:571.6px" width="9.6" height="6" viewBox="0 0 9.6 6"><path d="M0.8,0.8 L4.8,4.8 L8.8,0.8" fill="none" stroke="#404040" stroke-width="1.9"/></svg>
<svg class="r" style="left:41.6px;top:566.8px" width="16" height="12.8" viewBox="0 0 16 12.8"><path d="M0.8,11.6 L0.8,3.6 L2.4,1.6 L5.8,1.6 L7,3.2 L11.2,3.2 L11.2,6" fill="#fbe3a3" stroke="#c58a2e" stroke-width="0.9"/><path d="M0.8,12 L4,6.4 L15,6.4 L11.6,12 Z" fill="#fbe0a0" stroke="#c58a2e" stroke-width="0.9" stroke-linejoin="round"/><path d="M6.8,0.2 C8,0.6 9,2 9.4,3.4 L10.8,3.4 C11.2,2 12.2,0.6 13.4,0.2 C13.8,2 13.4,4 12.6,5.2 L12.8,6.4 L7.4,6.4 L7.6,5.2 C6.8,4 6.4,2 6.8,0.2Z" fill="#45bdf2"/></svg>
<svg class="r" style="left:60.6px;top:600px" width="15" height="15.8" viewBox="0 0 15 15.8"><defs><linearGradient id="mg1" x1="0" y1="0" x2="0" y2="1"><stop offset="0" stop-color="#7ad4fb"/><stop offset="1" stop-color="#1e9fe0"/></linearGradient></defs><path d="M7.4,6.6 C6.6,4.6 4.6,1.7 2.2,0.3 C0.8,-0.2 0.2,0.8 0.5,2.4 C0.9,4.6 2.2,6.8 3.8,8.2 C2.8,9.8 2.2,12.4 2.4,14.6 C2.5,15.4 3,15.7 3.8,15.7 L11,15.7 C11.8,15.7 12.3,15.4 12.4,14.6 C12.6,12.4 12,9.8 11,8.2 C12.6,6.8 13.9,4.6 14.3,2.4 C14.6,0.8 14,-0.2 12.6,0.3 C10.2,1.7 8.2,4.6 7.4,6.6 Z" fill="url(#mg1)"/></svg>
<svg class="r" style="left:62.6px;top:636px" width="11.8" height="14.6" viewBox="0 0 11.8 14.6"><path d="M0.6,0.6 L7.6,0.6 L11,4 L11,13.8 L0.6,13.8 Z" fill="#fdfdff" stroke="#a9aab8" stroke-width="0.9"/><path d="M7.6,0.6 L7.6,4 L11,4 Z" fill="#e8d9a8" stroke="#b8a36a" stroke-width="0.7"/><path d="M2.4,5.6 H9 M2.4,7.6 H9 M2.4,9.6 H9 M2.4,11.6 H7.4" stroke="#5570c0" stroke-width="0.9"/><path d="M0.4,13.9 H11.2" stroke="#8a90c0" stroke-width="1"/></svg>
<svg class="r" style="left:62.6px;top:671px" width="11.8" height="14.6" viewBox="0 0 11.8 14.6"><path d="M0.6,0.6 L7.6,0.6 L11,4 L11,13.8 L0.6,13.8 Z" fill="#fdfdff" stroke="#a9aab8" stroke-width="0.9"/><path d="M7.6,0.6 L7.6,4 L11,4 Z" fill="#e8d9a8" stroke="#b8a36a" stroke-width="0.7"/><path d="M2.4,5.6 H9 M2.4,7.6 H9 M2.4,9.6 H9 M2.4,11.6 H7.4" stroke="#5570c0" stroke-width="0.9"/><path d="M0.4,13.9 H11.2" stroke="#8a90c0" stroke-width="1"/></svg>
<div class="r" style="left:0;top:696px;width:681px;height:18.6px;overflow:hidden">
<svg class="r" style="left:42px;top:12px" width="15" height="14" viewBox="0 0 15 14"><path d="M0.6,13 L0.6,3 L2,1 L6,1 L7.4,3 L14,3 L14,13 Z" fill="#f6d891" stroke="#b8863a" stroke-width="0.9"/><rect x="4" y="5" width="8" height="7" fill="#a0522d"/><path d="M4,8.5H12M8,5V12" stroke="#f6d891" stroke-width="0.8"/></svg>
</div>
<svg class="r" style="left:9.8px;top:767px" width="15" height="16" viewBox="0 0 15 16"><defs><linearGradient id="mu1" x1="0" y1="0" x2="1" y2="0"><stop offset="0" stop-color="#9acb96"/><stop offset="0.5" stop-color="#4f9a4c"/><stop offset="0.5" stop-color="#f47a44"/><stop offset="1" stop-color="#f2561f"/></linearGradient></defs><path d="M7.4,6.6 C6.6,4.6 4.6,1.7 2.2,0.3 C0.8,-0.2 0.2,0.8 0.5,2.4 C0.9,4.6 2.2,6.8 3.8,8.2 C2.8,9.8 2.2,12.4 2.4,14.6 C2.5,15.4 3,15.7 3.8,15.7 L11,15.7 C11.8,15.7 12.3,15.4 12.4,14.6 C12.6,12.4 12,9.8 11,8.2 C12.6,6.8 13.9,4.6 14.3,2.4 C14.6,0.8 14,-0.2 12.6,0.3 C10.2,1.7 8.2,4.6 7.4,6.6 Z" fill="url(#mu1)"/><path d="M0.9,15 V11 M0.9,11.8 H3.2 Q3.9,11.8 3.9,12.6 V15 M3.9,11.8 H6.2 Q6.9,11.8 6.9,12.6 V15" stroke="#3a3a3a" stroke-width="1.5" fill="none"/></svg>
<svg class="r" style="left:94px;top:776px" width="9.6" height="9.6" viewBox="0 0 9.6 9.6"><path d="M1,1 L8.6,8.6 M8.6,1 L1,8.6" stroke="#b8b8b8" stroke-width="1.8"/></svg>
<svg class="r" style="left:570.4px;top:757.6px" width="16" height="16" viewBox="0 0 16 16"><defs><radialGradient id="mr1" cx="0.4" cy="0.35" r="0.75"><stop offset="0" stop-color="#8fdc8a"/><stop offset="1" stop-color="#1d7a2a"/></radialGradient></defs><circle cx="5.6" cy="5.6" r="5.3" fill="url(#mr1)" stroke="#1f7a30" stroke-width="0.6"/><polygon points="3.8,2.6 9,5.6 3.8,8.6" fill="#fff"/><path d="M7,9.6 L11,9.6 L11,7.8 L15.4,11.4 L11,15 L11,13.2 L7,13.2 Z" fill="#fbd45a" stroke="#c8861e" stroke-width="0.9" stroke-linejoin="round" transform="rotate(28 11 11.4)"/></svg>
<svg class="r" style="left:594.6px;top:757.6px" width="16" height="16" viewBox="0 0 16 16"><path d="M5.6,3 V0.6 M2,1.6 L4,4 M9.2,1.6 L7.2,4 M0.4,5.4 H3.4 M10.8,5.4 H7.8 M1.2,10 L3.6,8 M10,10 L7.6,8" stroke="#1f5f6a" stroke-width="1.1"/><ellipse cx="5.6" cy="6.2" rx="2.7" ry="3.5" fill="#9ed08a" stroke="#2a6a78" stroke-width="0.9"/><path d="M7,9.6 L11,9.6 L11,7.8 L15.4,11.4 L11,15 L11,13.2 L7,13.2 Z" fill="#fbd45a" stroke="#c8861e" stroke-width="0.9" stroke-linejoin="round" transform="rotate(28 11 11.4)"/></svg>
<div class="r" style="left:615.6px;top:757px;width:1.20px;height:16.60px;background:#8a8a8a;"></div>
<svg class="r" style="left:624.6px;top:757.6px" width="16" height="16" viewBox="0 0 16 16"><path d="M1.6,0.8 L8,0.8 Q10,3 9.4,6 L7,9.6 L1.6,11.6 Z" fill="#c2c2c2" stroke="#a6a6a6" stroke-width="0.8"/><polygon points="3.2,2.6 7.4,5.6 3.2,8.6" fill="#ececec"/><circle cx="3" cy="12" r="2.2" fill="#d0d0d0" stroke="#9c9c9c" stroke-width="0.7"/><path d="M1.8,10.8L4.2,13.2M4.2,10.8L1.8,13.2" stroke="#f4f4f4" stroke-width="0.8"/><path d="M7,9.4 L11,9.4 L11,7.6 L15.4,11.2 L11,14.8 L11,13 L7,13 Z" fill="#e4e4e4" stroke="#b8b8b8" stroke-width="0.8" stroke-linejoin="round"/></svg>
<svg class="r" style="left:647.6px;top:757.6px" width="16" height="16" viewBox="0 0 16 16"><path d="M5.6,3 V0.8 M2.2,2 L4,4 M9,2 L7.2,4 M0.6,5.6 H3.4 M10.6,5.6 H7.8 M1.4,10 L3.6,8 M9.8,10 L7.6,8" stroke="#a6a6a6" stroke-width="1.1"/><ellipse cx="5.6" cy="6.4" rx="2.8" ry="3.6" fill="#c8c8c8" stroke="#a6a6a6" stroke-width="0.8"/><circle cx="3" cy="12" r="2.2" fill="#d0d0d0" stroke="#9c9c9c" stroke-width="0.7"/><path d="M1.8,10.8L4.2,13.2M4.2,10.8L1.8,13.2" stroke="#f4f4f4" stroke-width="0.8"/><path d="M7,9.4 L11,9.4 L11,7.6 L15.4,11.2 L11,14.8 L11,13 L7,13 Z" fill="#e4e4e4" stroke="#b8b8b8" stroke-width="0.8" stroke-linejoin="round"/></svg>
<svg class="r" style="left:673.6px;top:760.8px" width="10.2" height="4.4" viewBox="0 0 10.2 4.4"><rect x="0.6" y="0.6" width="9" height="3.2" fill="#fff" stroke="#555" stroke-width="1.1"/></svg>
<svg class="r" style="left:696.8px;top:760.8px" width="10.2" height="10.2" viewBox="0 0 10.2 10.2"><rect x="0.6" y="0.6" width="9" height="9" fill="#fff" stroke="#555" stroke-width="1.1"/><path d="M0.6,2.6H9.6" stroke="#555" stroke-width="1.1"/></svg>
<svg class="r" style="left:232px;top:817.8px" width="7.4" height="8.4" viewBox="0 0 7.4 8.4"><rect x="0.4" y="0.4" width="6.6" height="7.6" fill="#d8304a"/><path d="M2,2.2 L5.4,6.2 M5.4,2.2 L2,6.2" stroke="#fff" stroke-width="1.1"/></svg>
<svg class="r" style="left:461.6px;top:817.8px" width="7.4" height="8.4" viewBox="0 0 7.4 8.4"><rect x="0.4" y="0.4" width="6.6" height="7.6" fill="#2a5aa8"/><path d="M2,2.2 L5.4,6.2 M5.4,2.2 L2,6.2" stroke="#cfe0f8" stroke-width="1.1"/></svg>
<svg class="r" style="left:112.8px;top:924px" width="26" height="26" viewBox="0 0 26 26"><circle cx="13" cy="13" r="11.9" fill="#fff" stroke="#333" stroke-width="2.1"/></svg>
<svg class="r" style="left:289px;top:924px" width="26" height="26" viewBox="0 0 26 26"><circle cx="13" cy="13" r="11.9" fill="#fff" stroke="#333" stroke-width="2.1"/><circle cx="13" cy="13" r="6.6" fill="#333"/></svg>
<svg class="r" style="left:10px;top:984.6px" width="7" height="10.4" viewBox="0 0 7 10.4"><path d="M1,1 L5.6,5.2 L1,9.4" fill="none" stroke="#b0b0b0" stroke-width="1.9"/></svg>
<svg class="r" style="left:24.8px;top:982px" width="14.6" height="15.8" viewBox="0 0 14.6 15.8"><path d="M7.4,6.6 C6.6,4.6 4.6,1.7 2.2,0.3 C0.8,-0.2 0.2,0.8 0.5,2.4 C0.9,4.6 2.2,6.8 3.8,8.2 C2.8,9.8 2.2,12.4 2.4,14.6 C2.5,15.4 3,15.7 3.8,15.7 L11,15.7 C11.8,15.7 12.3,15.4 12.4,14.6 C12.6,12.4 12,9.8 11,8.2 C12.6,6.8 13.9,4.6 14.3,2.4 C14.6,0.8 14,-0.2 12.6,0.3 C10.2,1.7 8.2,4.6 7.4,6.6 Z" fill="#62b530"/></svg>
<svg class="r" style="left:8.4px;top:1142.3px" width="25.1" height="25.2" viewBox="0 0 25.1 25.2"><path d="M3.8,13.1 L10.1,18.4 L21.8,6.2" fill="none" stroke="#2a2a2a" stroke-width="1.6"/></svg>
<svg class="r" style="left:730.4px;top:107px" width="15" height="16" viewBox="0 0 15 16"><defs><linearGradient id="mu2" x1="0" y1="0" x2="1" y2="0"><stop offset="0" stop-color="#9acb96"/><stop offset="0.5" stop-color="#4f9a4c"/><stop offset="0.5" stop-color="#f47a44"/><stop offset="1" stop-color="#f2561f"/></linearGradient></defs><path d="M7.4,6.6 C6.6,4.6 4.6,1.7 2.2,0.3 C0.8,-0.2 0.2,0.8 0.5,2.4 C0.9,4.6 2.2,6.8 3.8,8.2 C2.8,9.8 2.2,12.4 2.4,14.6 C2.5,15.4 3,15.7 3.8,15.7 L11,15.7 C11.8,15.7 12.3,15.4 12.4,14.6 C12.6,12.4 12,9.8 11,8.2 C12.6,6.8 13.9,4.6 14.3,2.4 C14.6,0.8 14,-0.2 12.6,0.3 C10.2,1.7 8.2,4.6 7.4,6.6 Z" fill="url(#mu2)"/><path d="M0.9,15 V11 M0.9,11.8 H3.2 Q3.9,11.8 3.9,12.6 V15 M3.9,11.8 H6.2 Q6.9,11.8 6.9,12.6 V15" stroke="#3a3a3a" stroke-width="1.5" fill="none"/></svg>
<svg class="r" style="left:988px;top:118.2px" width="9.6" height="9.6" viewBox="0 0 9.6 9.6"><path d="M1,1 L8.6,8.6 M8.6,1 L1,8.6" stroke="#b8b8b8" stroke-width="1.8"/></svg>
<svg class="r" style="left:1020.4px;top:106.6px" width="15" height="15.8" viewBox="0 0 15 15.8"><defs><linearGradient id="mg2" x1="0" y1="0" x2="0" y2="1"><stop offset="0" stop-color="#7ad4fb"/><stop offset="1" stop-color="#1e9fe0"/></linearGradient></defs><path d="M7.4,6.6 C6.6,4.6 4.6,1.7 2.2,0.3 C0.8,-0.2 0.2,0.8 0.5,2.4 C0.9,4.6 2.2,6.8 3.8,8.2 C2.8,9.8 2.2,12.4 2.4,14.6 C2.5,15.4 3,15.7 3.8,15.7 L11,15.7 C11.8,15.7 12.3,15.4 12.4,14.6 C12.6,12.4 12,9.8 11,8.2 C12.6,6.8 13.9,4.6 14.3,2.4 C14.6,0.8 14,-0.2 12.6,0.3 C10.2,1.7 8.2,4.6 7.4,6.6 Z" fill="url(#mg2)"/></svg>
<svg class="r" style="left:731.6px;top:734px" width="13.4" height="14" viewBox="0 0 13.4 14"><rect x="0.8" y="0.8" width="11.6" height="8.6" rx="1" fill="#e8f0fc" stroke="#2f5fa8" stroke-width="1.5"/><path d="M3,3.6 H10 M3,6 H8" stroke="#7a9ad0" stroke-width="1"/><path d="M6.6,9.4 V12 M2.6,12.8 H10.6" stroke="#2f5fa8" stroke-width="1.6"/></svg>
<svg class="r" style="left:843px;top:742px" width="9.4" height="9.4" viewBox="0 0 9.4 9.4"><path d="M1,1 L8.6,8.6 M8.6,1 L1,8.6" stroke="#b8b8b8" stroke-width="1.8"/></svg>
<svg class="r" style="left:875.4px;top:733.4px" width="23" height="15.2" viewBox="0 0 23 15.2"><rect x="0" y="0.4" width="23" height="14.4" rx="3.4" fill="#a9a9a9"/><circle cx="11.5" cy="7.6" r="4.4" fill="none" stroke="#fff" stroke-width="2.2" stroke-dasharray="1.7,1.75"/><circle cx="11.5" cy="7.6" r="3.2" fill="#fff"/><circle cx="11.5" cy="7.6" r="1.5" fill="#a9a9a9"/></svg>
<svg class="r" style="left:1888.6px;top:724.8px" width="16" height="16" viewBox="0 0 16 16"><rect x="1.2" y="2.4" width="10.4" height="10.4" rx="1.2" fill="#bcbcbc" stroke="#d8d8d8" stroke-width="1.3"/></svg>
<svg class="r" style="left:1910.4px;top:724.8px" width="16" height="16" viewBox="0 0 16 16"><path d="M2.4,3 L12,12.4 M12,3 L2.4,12.4" stroke="#6c6c6c" stroke-width="3.9" stroke-linecap="round"/></svg>
<svg class="r" style="left:1932.6px;top:724.8px" width="16" height="16" viewBox="0 0 16 16"><path d="M2,2 L9.6,9.6 M9.6,2 L2,9.6" stroke="#f4f4f4" stroke-width="4.4" stroke-linecap="round"/><path d="M2,2 L9.6,9.6 M9.6,2 L2,9.6" stroke="#8a8a8a" stroke-width="2.8" stroke-linecap="round"/><path d="M6.6,6.4 L14,13.8 M14,6.4 L6.6,13.8" stroke="#6a6a6a" stroke-width="3.4" stroke-linecap="round"/></svg>
<svg class="r" style="left:1963px;top:724.8px" width="16" height="16" viewBox="0 0 16 16"><path d="M0.6,0.6 L7,0.6 L10,3.6 L10,13 L0.6,13 Z" fill="#fbfbf4" stroke="#9a9a8a" stroke-width="0.9"/><path d="M2.2,4.4H8M2.2,6.4H8M2.2,8.4H8M2.2,10.4H6" stroke="#7a8ab0" stroke-width="0.8"/><path d="M8.6,9 L14.4,14.8 M14.4,9 L8.6,14.8" stroke="#6a6a6a" stroke-width="2.2"/></svg>
<svg class="r" style="left:1986.4px;top:724.8px" width="16" height="16" viewBox="0 0 16 16"><rect x="6.6" y="0.6" width="8" height="13" fill="#fbfbf4" stroke="#9a9a8a" stroke-width="0.9"/><path d="M10.6,3v2M10.6,7v2M10.6,11v1" stroke="#2a4a9a" stroke-width="1.6"/><path d="M2.4,8 V5.6 Q2.4,3.2 4.6,3.2 Q6.8,3.2 6.8,5.6 V8" fill="none" stroke="#c89a2a" stroke-width="1.4"/><rect x="0.8" y="7.8" width="7.6" height="6.6" fill="#f2c24a" stroke="#b8861e" stroke-width="0.9"/></svg>
<svg class="r" style="left:2009.4px;top:724.8px" width="16" height="16" viewBox="0 0 16 16"><path d="M0.6,0.6 L7,0.6 L10,3.6 L10,13 L0.6,13 Z" fill="#fbfbf4" stroke="#9a9a8a" stroke-width="0.9"/><path d="M2.2,4.4H8M2.2,6.4H8M2.2,8.4H8M2.2,10.4H6" stroke="#7a8ab0" stroke-width="0.8"/><path d="M8,4.6 H12.6 Q14.6,4.6 14.6,6.6 Q14.6,8.8 12.6,8.8 H9.6 M11.4,6.8 L9.2,8.8 L11.4,10.8" fill="none" stroke="#d6a02a" stroke-width="1.5"/></svg>
<svg class="r" style="left:2032.6px;top:724.8px" width="16" height="16" viewBox="0 0 16 16"><rect x="3.6" y="0.8" width="11" height="8" rx="1" fill="#eef3fc" stroke="#2f5fa8" stroke-width="1.3"/><rect x="0.8" y="4.2" width="9.6" height="7" rx="1" fill="#eef3fc" stroke="#2f5fa8" stroke-width="1.3"/><path d="M2.6,6.6H8.4M2.6,8.6H7" stroke="#8aa4d8" stroke-width="0.8"/><path d="M5.6,11.2V13.6M2.6,14.4H8.6" stroke="#2f5fa8" stroke-width="1.4"/></svg>
<svg class="r" style="left:2055.2px;top:724.8px" width="16" height="16" viewBox="0 0 16 16"><rect x="3.6" y="0.8" width="11" height="8" rx="1" fill="#eef3fc" stroke="#2f5fa8" stroke-width="1.3"/><rect x="0.8" y="4.2" width="9.6" height="7" rx="1" fill="#eef3fc" stroke="#2f5fa8" stroke-width="1.3"/><path d="M2.6,6.6H8.4M2.6,8.6H7" stroke="#8aa4d8" stroke-width="0.8"/><path d="M5.6,11.2V13.6M2.6,14.4H8.6" stroke="#2f5fa8" stroke-width="1.4"/><path d="M9.4,1.6 L13.6,5.8 M13.6,1.6 L9.4,5.8" stroke="#d02a2a" stroke-width="1.4"/></svg>
<svg class="r" style="left:2086.8px;top:724.8px" width="16" height="16" viewBox="0 0 16 16"><rect x="0.6" y="4.6" width="12.6" height="9.6" fill="#f6f9ff" stroke="#6a94d4" stroke-width="0.9"/><rect x="0.6" y="4.6" width="12.6" height="2" fill="#3f76c8"/><path d="M7.6,8.6 L12,3.6" stroke="#1e7a34" stroke-width="1.6"/><circle cx="12.6" cy="2.8" r="2.6" fill="#35a850" stroke="#1e7a34" stroke-width="0.7"/></svg>
<svg class="r" style="left:2111px;top:724.8px" width="16" height="16" viewBox="0 0 16 16"><rect x="1" y="0.8" width="12.4" height="9.4" rx="1" fill="#e9e9e9" stroke="#909090" stroke-width="1.7"/><path d="M3.4,3.6H11M3.4,6H9" stroke="#a8a8a8" stroke-width="1"/><path d="M7.2,10.2V13M3.2,13.8H11.2" stroke="#909090" stroke-width="1.7"/></svg>
<svg class="r" style="left:2163.6px;top:724.8px" width="16" height="16" viewBox="0 0 16 16"><rect x="0.6" y="3.6" width="12.6" height="10.6" fill="#fbfbf4" stroke="#8a7a4a" stroke-width="1"/><rect x="0.6" y="3.6" width="12.6" height="2.2" fill="#3f66b8"/><path d="M12.8,0 L13.7,2.1 L16,3 L13.7,3.9 L12.8,6 L11.9,3.9 L9.6,3 L11.9,2.1Z" fill="#ffe9a0" stroke="#c8962c" stroke-width="0.8"/></svg>
<div class="r" style="left:1954px;top:723px;width:1.20px;height:18.60px;background:#8a8a8a;"></div>
<div class="r" style="left:2077px;top:723px;width:1.20px;height:18.60px;background:#8a8a8a;"></div>
<svg class="r" style="left:2136.6px;top:728px" width="14.6" height="8.6" viewBox="0 0 14 8.3"><polygon points="0,0 14,0 7,8.3" fill="#6d6d6d"/></svg>
<svg class="r" style="left:2190.8px;top:728px" width="14.6" height="8.6" viewBox="0 0 14 8.3"><polygon points="0,0 14,0 7,8.3" fill="#222"/></svg>
<svg class="r" style="left:2219.6px;top:726.8px" width="10.2" height="4.4" viewBox="0 0 10.2 4.4"><rect x="0.6" y="0.6" width="9" height="3.2" fill="#fff" stroke="#555" stroke-width="1.1"/></svg>
<svg class="r" style="left:2242.6px;top:726.8px" width="10.2" height="10.2" viewBox="0 0 10.2 10.2"><rect x="0.6" y="0.6" width="9" height="9" fill="#fff" stroke="#555" stroke-width="1.1"/><path d="M0.6,2.6H9.6" stroke="#555" stroke-width="1.1"/></svg>
<svg class="r" style="left:2236.6px;top:811.4px" width="13.2" height="8" viewBox="0 0 13.2 8"><path d="M1.2,6.8 L6.6,1.6 L12,6.8" fill="none" stroke="#555" stroke-width="2"/></svg>
<svg class="r" style="left:2236.6px;top:1234.6px" width="13.2" height="8" viewBox="0 0 13.2 8"><path d="M1.2,1.2 L6.6,6.4 L12,1.2" fill="none" stroke="#555" stroke-width="2"/></svg>
<svg class="r" style="left:733.6px;top:1266.0px" width="8" height="13.2" viewBox="0 0 8 13.2"><path d="M6.8,1.2 L1.6,6.6 L6.8,12" fill="none" stroke="#555" stroke-width="2"/></svg>
<svg class="r" style="left:2203.6px;top:1266.0px" width="8" height="13.2" viewBox="0 0 8 13.2"><path d="M1.2,1.2 L6.4,6.6 L1.2,12" fill="none" stroke="#555" stroke-width="2"/></svg>

</body></html>
